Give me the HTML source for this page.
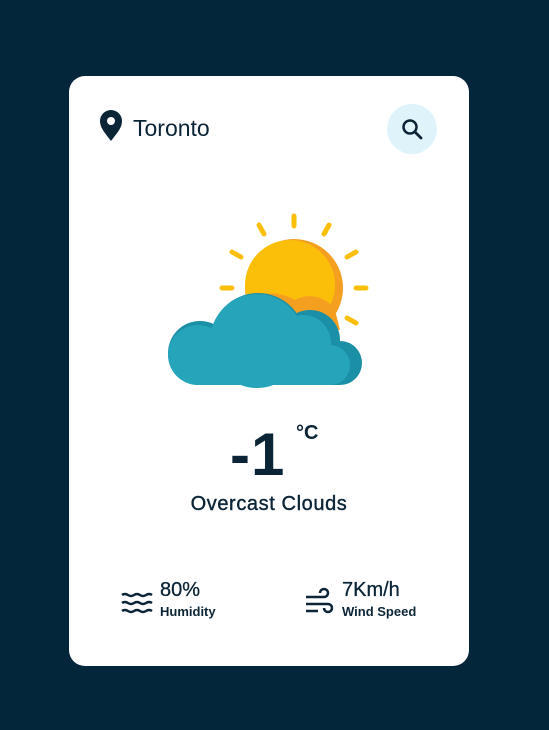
<!DOCTYPE html>
<html><head><style>
body{margin:0;background:#04263b;width:549px;height:730px;position:relative;font-family:"Liberation Sans",Roboto,sans-serif;overflow:hidden}
.card{position:absolute;left:69px;top:76px;width:400px;height:590px;background:#fff;border-radius:16px}
.t{position:absolute;color:#0b2537}
</style></head><body>
<div class="card"></div>
<svg width="549" height="730" style="position:absolute;left:0;top:0">
<path d="M111 141c-6-8-11-13-11-20a11 11 0 0 1 22 0c0 7-5 12-11 20z" fill="#0b2537"/>
<circle cx="111" cy="121" r="4" fill="#fff"/>
<circle cx="412" cy="129" r="25" fill="#dff3fb"/>
<circle cx="410" cy="127" r="6.5" fill="none" stroke="#0b2537" stroke-width="2.5"/>
<path d="M415 132l6 6" stroke="#0b2537" stroke-width="2.8" stroke-linecap="round"/>
<g stroke="#fbbf0a" stroke-width="5" stroke-linecap="round">
<path d="M294 216v10M259 225l5 9M329 225l-5 9M232 252l9 5M356 252l-9 5M222 288h10M356 288h10M347 318l9 5"/>
</g>
<circle cx="294" cy="288" r="49" fill="#f59f20"/>
<circle cx="290" cy="285" r="45" fill="#fbbf0a"/>
<path d="M245 300a50 50 0 0 1 50 0 a30 30 0 0 1 40 10 L340 330 L245 330z" fill="#f59f20"/>
<g fill="#1a8fa6">
<circle cx="200" cy="353" r="32"/><circle cx="258" cy="340" r="47"/><circle cx="310" cy="340" r="30"/><circle cx="340" cy="363" r="22"/><rect x="200" y="350" width="140" height="35"/>
</g>
<g fill="#26a4b9">
<circle cx="198" cy="355" r="30"/><circle cx="257" cy="341" r="47"/><circle cx="303" cy="343" r="28"/><circle cx="330" cy="365" r="20"/><rect x="198" y="350" width="132" height="35"/>
</g>
<g stroke="#0b2537" stroke-width="2.5" fill="none">
<path d="M122 595q3-2 6 0t6 0t6 0t6 0t6 0M122 603q3-2 6 0t6 0t6 0t6 0t6 0M122 611q3-2 6 0t6 0t6 0t6 0t6 0"/>
<path d="M306 597h18a4 4 0 1 0-4-4M306 604h22a4 4 0 1 1-4 4M306 611h12"/>
</g>
</svg>
<div class="t" style="left:133px;top:115px;font-size:23px">Toronto</div>
<div class="t" style="left:230px;top:420px;font-size:60px;font-weight:bold;letter-spacing:1px">-1</div>
<div class="t" style="left:296px;top:422px;font-size:20px;font-weight:bold">°C</div>
<div class="t" style="left:0;width:538px;text-align:center;top:493px;font-size:20px;letter-spacing:0.6px;-webkit-text-stroke:0.4px #0b2537">Overcast Clouds</div>
<div class="t" style="left:160px;top:579px;font-size:20px;-webkit-text-stroke:0.3px #0b2537">80%</div>
<div class="t" style="left:160px;top:604px;font-size:13px;font-weight:bold">Humidity</div>
<div class="t" style="left:342px;top:579px;font-size:20px;-webkit-text-stroke:0.3px #0b2537">7Km/h</div>
<div class="t" style="left:342px;top:604px;font-size:13px;font-weight:bold">Wind Speed</div>
</body></html>
